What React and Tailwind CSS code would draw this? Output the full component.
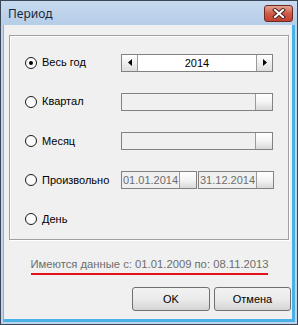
import React from 'react';

const font = { fontFamily: '"Liberation Sans", Arial, sans-serif' };

function Radio({ label, checked }) {
  return (
    <div className="flex items-center w-[96px]">
      <span className="w-[12px] h-[12px] rounded-full border border-[#1a1a1a] bg-[#fbfbfb] flex items-center justify-center">
        {checked && <span className="w-[4px] h-[4px] rounded-full bg-black" />}
      </span>
      <span className="ml-[5px] text-[11px] leading-[13px] text-black">{label}</span>
    </div>
  );
}

function Arrow({ dir }) {
  return (
    <svg width="4" height="7" viewBox="0 0 4 7">
      {dir === 'left' ? <path d="M4 0 L0 3.5 L4 7 Z" fill="#000" /> : <path d="M0 0 L4 3.5 L0 7 Z" fill="#000" />}
    </svg>
  );
}

function DropButton() {
  return <div className="w-[17px] h-full border-l border-[#9a9a9a] bg-gradient-to-b from-white via-[#f4f4f4] to-[#d9d9d9]" />;
}

function Combo() {
  return (
    <div className="w-[152px] h-[18px] border border-[#828282] bg-[#f0f0f0] flex justify-end">
      <DropButton />
    </div>
  );
}

function DateBox({ value }) {
  return (
    <div className="w-[76px] h-[18px] border border-[#828282] bg-[#f0f0f0] flex">
      <span className="flex-1 text-[11px] leading-[16px] text-[#6d6d6d] pl-px">{value}</span>
      <DropButton />
    </div>
  );
}

function Row({ children }) {
  return <div className="h-[40px] flex items-center">{children}</div>;
}

function WinButton({ children, w }) {
  return (
    <button className={`${w} h-[24px] rounded-[3px] border border-[#707070] bg-gradient-to-b from-[#f2f2f2] via-[#ebebeb] to-[#d4d4d4] text-[11px] text-black`}>
      {children}
    </button>
  );
}

export default function App() {
  return (
    <div className="w-[298px] h-[325px] flex flex-col bg-[#bfd4ec] border border-[#3a4756]" style={font}>
      {/* title bar */}
      <div className="h-[24px] flex items-start justify-between bg-gradient-to-b from-[#c7daef] to-[#b6cde8]">
        <span className="pl-[7px] pt-[5px] text-[12px] leading-[15px] text-[#1b2836]" style={{ fontFamily: '"Noto Sans", "Open Sans", sans-serif' }}>
          Период
        </span>
        <div className="mt-[4px] mr-[4px] w-[29px] h-[17px] rounded-[3px] border border-[#6b2a22] bg-gradient-to-b from-[#e4a394] via-[#cf5a48] to-[#c2402f] flex items-center justify-center">
          <svg width="14" height="11" viewBox="0 0 14 11">
            <path d="M3 2 L11 9 M11 2 L3 9" stroke="#4a2520" strokeWidth="4" strokeLinecap="square" />
            <path d="M3 2 L11 9 M11 2 L3 9" stroke="#fff" strokeWidth="2" strokeLinecap="square" />
          </svg>
        </div>
      </div>

      {/* client area */}
      <div className="flex-1 ml-[2px] mr-[2px] mb-[2px] bg-[#f0f0f0] border-l border-[#8eaed2] border-r-[3px] border-r-[#48b2e6] border-b-[3px] border-b-[#48b2e6] flex flex-col">
        <div className="mt-[10px] ml-[5px] w-[280px] h-[205px] border border-[#a0a0a0] shadow-[1px_1px_0_#ffffff,inset_1px_1px_0_#ffffff] pl-[15px] pt-[7px] flex flex-col">
          <Row>
            <Radio label="Весь год" checked />
            <div className="w-[152px] h-[18px] border border-[#828282] bg-white flex">
              <div className="w-[16px] h-full border-r border-[#9a9a9a] bg-gradient-to-b from-white to-[#dedede] flex items-center justify-center">
                <Arrow dir="left" />
              </div>
              <span className="flex-1 text-center text-[11px] leading-[16px] text-black">2014</span>
              <div className="w-[16px] h-full border-l border-[#9a9a9a] bg-gradient-to-b from-white to-[#dedede] flex items-center justify-center">
                <Arrow dir="right" />
              </div>
            </div>
          </Row>
          <Row>
            <Radio label="Квартал" />
            <Combo />
          </Row>
          <Row>
            <Radio label="Месяц" />
            <Combo />
          </Row>
          <Row>
            <Radio label="Произвольно" />
            <div className="flex gap-px">
              <DateBox value="01.01.2014" />
              <DateBox value="31.12.2014" />
            </div>
          </Row>
          <Row>
            <Radio label="День" />
          </Row>
        </div>

        <div className="mt-[17px] pl-[3px] flex justify-center">
          <span className="text-[11.25px] leading-[14px] text-[#6d6d6d] whitespace-nowrap">
            Имеются данные с: 01.01.2009 по: 08.11.2013
          </span>
        </div>
        <div className="mt-[2px] ml-[27px] w-[237px] h-[2px] bg-[#e5121d]" />

        <div className="mt-[12px] flex justify-end gap-[4px] pr-[1px]">
          <WinButton w="w-[78px]">OK</WinButton>
          <WinButton w="w-[77px]">Отмена</WinButton>
        </div>
      </div>
    </div>
  );
}
